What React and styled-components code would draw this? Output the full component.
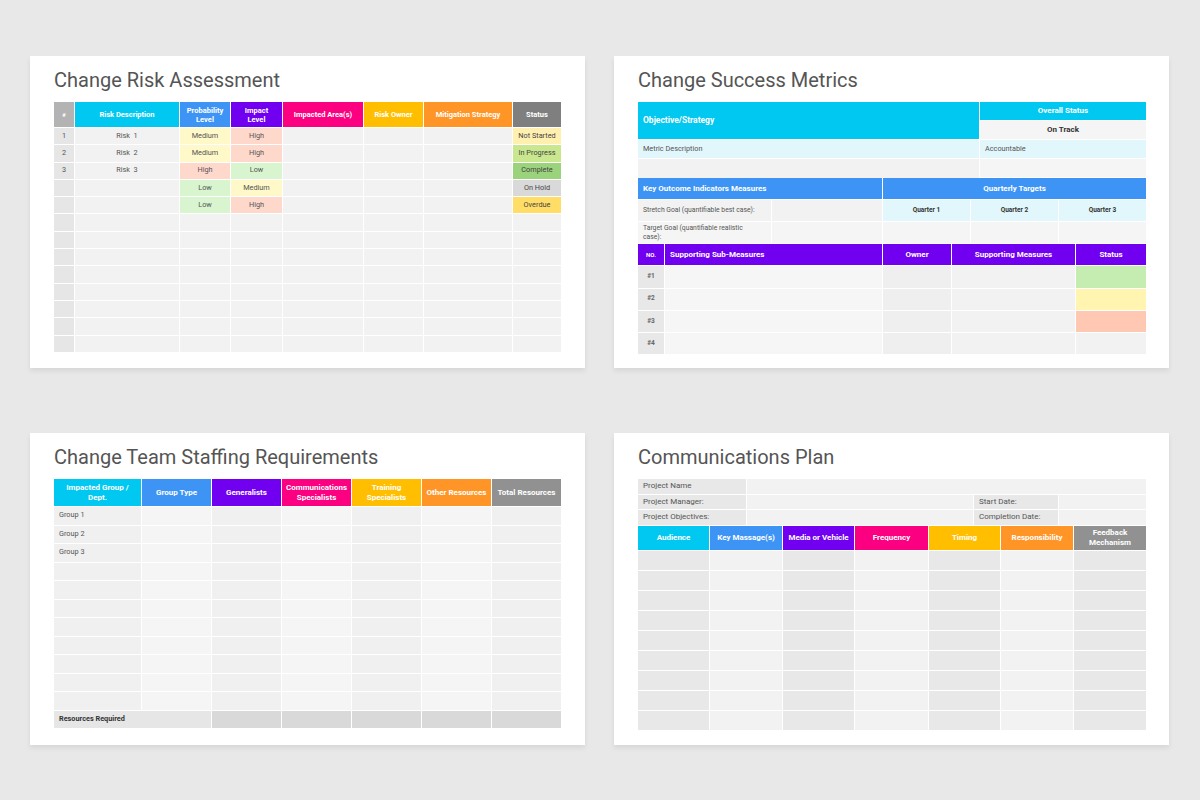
import React from 'react'
import styled, { createGlobalStyle } from 'styled-components'

const GlobalStyle = createGlobalStyle`
  body {
    margin: 0;
    background: #e9e8e9;
    font-family: Roboto, "Liberation Sans", sans-serif;
  }
`

const C = {
  cyan: '#00c8f0',
  blue: '#3d94f5',
  purple: '#7000ef',
  pink: '#fb0081',
  amber: '#ffbf00',
  orange: '#ff9527',
  gray: '#7f7f7f',
  lightGray: '#b3b3b3',
  midGray: '#919191',
}

const Page = styled.div`
  display: grid;
  grid-template-columns: 555px 555px;
  column-gap: 29px;
  row-gap: 65px;
  padding: 56px 30px;
`

const Card = styled.section`
  background: #fff;
  height: 312px;
  box-sizing: border-box;
  padding: 10px 24px 0;
  box-shadow: 0 3px 5px rgba(0, 0, 0, 0.08);
`

const Title = styled.h2`
  margin: 0 0 8px;
  font-size: 20px;
  line-height: 28px;
  font-weight: 400;
  color: #555;
`

const Stack = styled.div`
  display: flex;
  flex-direction: column;
  gap: 1px;
  background: #fff;
`

const Grid = styled.div`
  display: grid;
  grid-template-columns: ${p => p.$cols};
  grid-template-rows: ${p => p.$head || 'none'};
  grid-auto-rows: ${p => p.$rows};
  gap: 1px;
  background: #fff;
`

const Head = styled.div`
  background: ${p => p.$bg};
  color: #fff;
  font-weight: 700;
  font-size: ${p => p.$size || 7.5}px;
  line-height: 1.2;
  display: flex;
  align-items: center;
  justify-content: ${p => (p.$left ? 'flex-start' : 'center')};
  text-align: ${p => (p.$left ? 'left' : 'center')};
  padding: 0 ${p => (p.$left ? 5 : 4)}px;
  grid-column: ${p => (p.$span ? `span ${p.$span}` : 'auto')};
  grid-row: ${p => (p.$rspan ? `span ${p.$rspan}` : 'auto')};
`

const Cell = styled.div`
  background: ${p => p.$bg || '#f2f2f2'};
  color: ${p => p.$color || '#555'};
  font-size: ${p => p.$size || 7.3}px;
  font-weight: ${p => (p.$bold ? 700 : 400)};
  line-height: 1.2;
  display: flex;
  align-items: center;
  justify-content: ${p => (p.$left ? 'flex-start' : 'center')};
  text-align: ${p => (p.$left ? 'left' : 'center')};
  padding: 0 ${p => p.$pr || 5}px 0 5px;
  white-space: pre-wrap;
  overflow: hidden;
  grid-column: ${p => (p.$span ? `span ${p.$span}` : 'auto')};
`

/* ---------- Change Risk Assessment ---------- */

const level = {
  Medium: '#fff8c8',
  High: '#ffd8cc',
  Low: '#d8f5cf',
}

const status = {
  'Not Started': '#fff0b0',
  'In Progress': '#c9e78e',
  Complete: '#9bd27c',
  'On Hold': '#d9d9d9',
  Overdue: '#ffdd66',
}

const riskRows = [
  ['1', 'Risk  1', 'Medium', 'High', 'Not Started'],
  ['2', 'Risk  2', 'Medium', 'High', 'In Progress'],
  ['3', 'Risk  3', 'High', 'Low', 'Complete'],
  ['', '', 'Low', 'Medium', 'On Hold'],
  ['', '', 'Low', 'High', 'Overdue'],
]

const RiskAssessment = () => {
  const rows = [...riskRows]
  while (rows.length < 13) rows.push(['', '', '', '', ''])
  return (
    <Card>
      <Title>Change Risk Assessment</Title>
      <Grid $cols="20px 104px 50px 51px 80px 59px 88px 48px" $head="25px" $rows="16.3px">
        <Head $bg={C.lightGray} $size={6}>#</Head>
        <Head $bg={C.cyan}>Risk Description</Head>
        <Head $bg={C.blue}>Probability Level</Head>
        <Head $bg={C.purple} style={{ padding: '0 10px' }}>Impact Level</Head>
        <Head $bg={C.pink}>Impacted Area(s)</Head>
        <Head $bg={C.amber}>Risk Owner</Head>
        <Head $bg={C.orange}>Mitigation Strategy</Head>
        <Head $bg={C.gray}>Status</Head>
        {rows.map((r, i) => (
          <React.Fragment key={i}>
            <Cell $bg="#e6e6e6">{r[0]}</Cell>
            <Cell>{r[1]}</Cell>
            <Cell $bg={level[r[2]]}>{r[2]}</Cell>
            <Cell $bg={level[r[3]]}>{r[3]}</Cell>
            <Cell />
            <Cell />
            <Cell />
            <Cell $bg={status[r[4]]} $color="#444">{r[4]}</Cell>
          </React.Fragment>
        ))}
      </Grid>
    </Card>
  )
}

/* ---------- Change Success Metrics ---------- */

const tint = '#e2f7fc'

const SuccessMetrics = () => (
  <Card>
    <Title>Change Success Metrics</Title>
    <Stack>
      <Grid $cols="341px 166px" $rows="18px">
        <Head $bg={C.cyan} $left $size={8.5} $rspan={2}>Objective/Strategy</Head>
        <Head $bg={C.cyan} $size={8}>Overall Status</Head>
        <Cell $bg="#f5f5f5" $bold $size={8} $color="#333">On Track</Cell>
        <Cell $bg={tint} $left>Metric Description</Cell>
        <Cell $bg={tint} $left>Accountable</Cell>
        <Cell $bg="#f2f2f2" style={{ height: 19 }} />
        <Cell $bg="#f5f5f5" />
      </Grid>
      <Grid $cols="244px 263px" $rows="21px">
        <Head $bg={C.blue} $left $size={8}>Key Outcome Indicators Measures</Head>
        <Head $bg={C.blue} $size={8}>Quarterly Targets</Head>
      </Grid>
      <Grid $cols="133px 110px 87px 87px 87px" $rows="21px">
        <Cell $left $size={6.8}>Stretch Goal (quantifiable best case):</Cell>
        <Cell />
        <Cell $bg={tint} $bold $size={6.5} $color="#333">Quarter 1</Cell>
        <Cell $bg={tint} $bold $size={6.5} $color="#333">Quarter 2</Cell>
        <Cell $bg={tint} $bold $size={6.5} $color="#333">Quarter 3</Cell>
        <Cell $left $size={6.8} $pr={16} $bg="#f5f5f5">Target Goal (quantifiable realistic case):</Cell>
        <Cell $bg="#f5f5f5" />
        <Cell $bg="#f5f5f5" />
        <Cell $bg="#f5f5f5" />
        <Cell $bg="#f5f5f5" />
      </Grid>
      <Grid $cols="26px 217px 68px 123px 70px" $rows="21.3px">
        <Head $bg={C.purple} $size={6}>NO.</Head>
        <Head $bg={C.purple} $left $size={8}>Supporting Sub-Measures</Head>
        <Head $bg={C.purple} $size={8}>Owner</Head>
        <Head $bg={C.purple} $size={8}>Supporting Measures</Head>
        <Head $bg={C.purple} $size={8}>Status</Head>
        {['#c6edb1', '#fff5b0', '#ffc8b3', '#f2f2f2'].map((s, i) => (
          <React.Fragment key={i}>
            <Cell $bg="#e8e8e8" $bold $size={6.5} $color="#666">#{i + 1}</Cell>
            <Cell $bg="#f6f6f6" />
            <Cell $bg="#efefef" />
            <Cell $bg="#f2f2f2" />
            <Cell $bg={s} />
          </React.Fragment>
        ))}
      </Grid>
    </Stack>
  </Card>
)

/* ---------- Change Team Staffing Requirements ---------- */

const staffCols = ['#f0f0f0', '#f5f5f5', '#f0f0f0', '#f5f5f5', '#f0f0f0', '#f5f5f5', '#f0f0f0']

const Staffing = () => {
  const groups = ['Group 1', 'Group 2', 'Group 3']
  while (groups.length < 11) groups.push('')
  return (
    <Card>
      <Title>Change Team Staffing Requirements</Title>
      <Grid $cols="87px 69px 69px 69px 69px 69px 69px" $head="27px" $rows="17.5px">
        <Head $bg={C.cyan} $size={8}>Impacted Group / Dept.</Head>
        <Head $bg={C.blue} $size={8}>Group Type</Head>
        <Head $bg={C.purple} $size={8}>Generalists</Head>
        <Head $bg={C.pink} $size={8}>Communications Specialists</Head>
        <Head $bg={C.amber} $size={8}>Training Specialists</Head>
        <Head $bg={C.orange} $size={8}>Other Resources</Head>
        <Head $bg={C.midGray} $size={8}>Total Resources</Head>
        {groups.map((g, i) => (
          <React.Fragment key={i}>
            {staffCols.map((bg, j) => (
              <Cell key={j} $bg={bg} $left>{j === 0 ? g : ''}</Cell>
            ))}
          </React.Fragment>
        ))}
        <Cell $span={2} $bg="#e6e6e6" $left $bold $color="#333">Resources Required</Cell>
        {[0, 1, 2, 3, 4].map(k => (
          <Cell key={k} $bg="#d9d9d9" />
        ))}
      </Grid>
    </Card>
  )
}

/* ---------- Communications Plan ---------- */

const planCols = ['#e8e8e8', '#f2f2f2', '#e8e8e8', '#f2f2f2', '#e8e8e8', '#f2f2f2', '#e8e8e8']

const CommsPlan = () => (
  <Card>
    <Title>Communications Plan</Title>
    <Stack>
      <Grid $cols="108px 226px 84px 87px" $rows="14.5px">
        <Cell $bg="#e8e8e8" $left $size={8}>Project Name</Cell>
        <Cell $span={3} />
        <Cell $bg="#e8e8e8" $left $size={8}>Project Manager:</Cell>
        <Cell />
        <Cell $bg="#e8e8e8" $left $size={8}>Start Date:</Cell>
        <Cell />
        <Cell $bg="#e8e8e8" $left $size={8}>Project Objectives:</Cell>
        <Cell />
        <Cell $bg="#e8e8e8" $left $size={8}>Completion Date:</Cell>
        <Cell />
      </Grid>
      <Grid $cols="71px 72px 71px 73px 71px 72px 72px" $head="24px" $rows="19px">
        <Head $bg={C.cyan} $size={8}>Audience</Head>
        <Head $bg={C.blue} $size={8}>Key Massage(s)</Head>
        <Head $bg={C.purple} $size={8}>Media or Vehicle</Head>
        <Head $bg={C.pink} $size={8}>Frequency</Head>
        <Head $bg={C.amber} $size={8}>Timing</Head>
        <Head $bg={C.orange} $size={8}>Responsibility</Head>
        <Head $bg={C.midGray} $size={8}>Feedback Mechanism</Head>
        {Array.from({ length: 9 }).map((_, i) => (
          <React.Fragment key={i}>
            {planCols.map((bg, j) => (
              <Cell key={j} $bg={bg} />
            ))}
          </React.Fragment>
        ))}
      </Grid>
    </Stack>
  </Card>
)

export default function App() {
  return (
    <>
      <GlobalStyle />
      <Page>
        <RiskAssessment />
        <SuccessMetrics />
        <Staffing />
        <CommsPlan />
      </Page>
    </>
  )
}
